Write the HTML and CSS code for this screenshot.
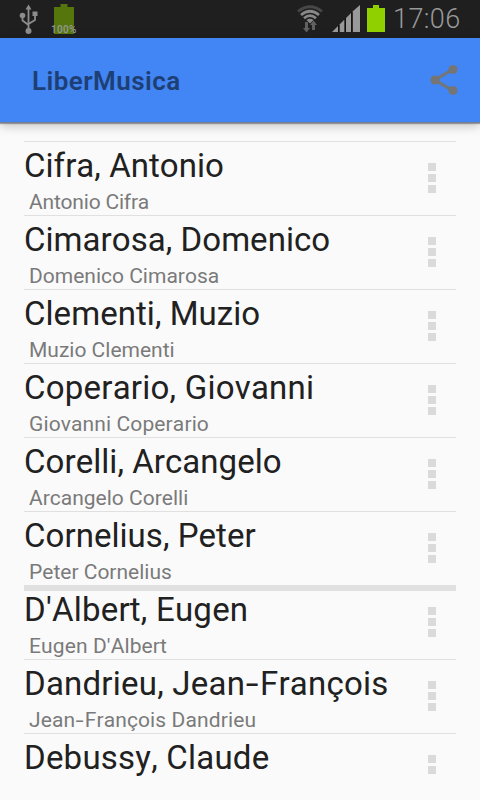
FILE: index.html
```
<!DOCTYPE html>
<html lang="en">
<head>
    <meta charset="UTF-8">
    <meta name="viewport" content="width=device-width, initial-scale=1.0">
    <title>LiberMusica</title>
    <link rel="stylesheet" href="styles.css">
</head>
<body>
<div class="status-bar">
    <svg class="usb" width="20" height="32" viewBox="0 0 20 32" fill="#8c8c8c">
        <path d="M9.500 1.500l3 5h-6z"/>
        <circle cx="9.500" cy="28" r="3"/>
        <circle cx="3.500" cy="12.500" r="2.800"/>
        <rect x="13.500" y="8.500" width="5" height="4.500"/>
        <path d="M9.500 5v22M3.500 14v3.500l6 4.500M16 12v5l-6.500 4" fill="none" stroke="#8c8c8c" stroke-width="1.800"/>
    </svg>
    <div class="charge">
        <svg width="20" height="30" viewBox="0 0 20 30" fill="#55750d"><path d="M6.500 0h7v3h6.500v27H0V3h6.500z"/></svg>
        <span class="charge-text">100%</span>
    </div>
    <div class="spacer"></div>
    <svg class="wifi" width="26" height="30" viewBox="0 0 26 30" fill="none" stroke-width="2.700">
        <path d="M1 7.500Q13 -2 25 7.500" stroke="#474747"/>
        <path d="M4 11Q13 3.500 22 11" stroke="#888"/>
        <path d="M7 14.300Q13 9 19 14.300" stroke="#888"/>
        <path d="M9.500 16Q13 13.500 16.500 16L13 19.500z" fill="#888" stroke="none"/>
        <path d="M8 18h3v6h2l-3.500 4.500L6 24h2zM15 26v-5h-2l3.500-4.500L20 21h-2v5z" fill="#606060" stroke="none"/>
    </svg>
    <svg class="signal" width="28" height="28" viewBox="0 0 28 28" fill="#999">
        <path d="M0 27L6 21v6zM7.500 19.500L12.500 14.500V27h-5zM14 13l5-5v19h-5zM20.500 6.500L28 0v27h-7.500z"/>
        <path d="M6.800 20v7M13.300 13v14M20 7v20" stroke="#111" stroke-width="1.300"/>
    </svg>
    <svg class="battery" width="18" height="27" viewBox="0 0 18 27" fill="#91d000"><path d="M6 0h6v3h6v24H0V3h6z"/></svg>
    <span class="clock">17:06</span>
</div>

<div class="toolbar">
    <span class="title">LiberMusica</span>
    <svg class="share" width="28" height="32" viewBox="0 0 28 32" fill="#757575">
        <path d="M22.500 5.500L5 16l17.500 10.500" fill="none" stroke="#757575" stroke-width="3"/>
        <circle cx="5" cy="16" r="4.500"/>
        <circle cx="23" cy="5.500" r="4.500"/>
        <circle cx="23" cy="26.500" r="4.500"/>
    </svg>
</div>

<div class="list">
    <div class="row">
        <div class="text"><div class="name">Cifra, Antonio</div><div class="sub tight">Antonio Cifra</div></div>
        <div class="menu"><i></i><i></i><i></i></div>
    </div>
    <div class="row">
        <div class="text"><div class="name">Cimarosa, Domenico</div><div class="sub">Domenico Cimarosa</div></div>
        <div class="menu"><i></i><i></i><i></i></div>
    </div>
    <div class="row">
        <div class="text"><div class="name">Clementi, Muzio</div><div class="sub">Muzio Clementi</div></div>
        <div class="menu"><i></i><i></i><i></i></div>
    </div>
    <div class="row">
        <div class="text"><div class="name wide">Coperario, Giovanni</div><div class="sub loose">Giovanni Coperario</div></div>
        <div class="menu"><i></i><i></i><i></i></div>
    </div>
    <div class="row">
        <div class="text"><div class="name">Corelli, Arcangelo</div><div class="sub">Arcangelo Corelli</div></div>
        <div class="menu"><i></i><i></i><i></i></div>
    </div>
    <div class="row">
        <div class="text"><div class="name">Cornelius, Peter</div><div class="sub">Peter Cornelius</div></div>
        <div class="menu"><i></i><i></i><i></i></div>
    </div>
    <div class="row letter">
        <div class="text"><div class="name wide">D'Albert, Eugen</div><div class="sub loose">Eugen D'Albert</div></div>
        <div class="menu"><i></i><i></i><i></i></div>
    </div>
    <div class="row">
        <div class="text"><div class="name wide">Dandrieu, Jean<span class="hyphen">-</span>François</div><div class="sub loose">Jean<span class="hyphen">-</span>François Dandrieu</div></div>
        <div class="menu"><i></i><i></i><i></i></div>
    </div>
    <div class="row">
        <div class="text"><div class="name wide">Debussy, Claude</div></div>
        <div class="menu"><i></i><i></i><i></i></div>
    </div>
</div>
</body>
</html>
```
FILE: styles.css
```
* {
    box-sizing: border-box;
}

body {
    margin: 0;
    height: 800px;
    overflow: hidden;
    display: flex;
    flex-direction: column;
    background-color: #fafafa;
    font-family: Roboto, sans-serif;
    font-kerning: none;
}

svg {
    display: block;
    flex: none;
}

.status-bar {
    height: 38px;
    flex: none;
    display: flex;
    align-items: flex-start;
    padding: 3px 20px 0 19px;
    background-color: #1f1f1f;
}

.charge {
    position: relative;
    margin: 1px 0 0 15px;
}

/* percentage printed over the battery */
.charge-text {
    position: absolute;
    left: -3px;
    bottom: 0;
    font-size: 10px;
    line-height: 9px;
    font-weight: 500;
    letter-spacing: 0.3px;
    color: #999;
}

.spacer {
    flex: 1;
}

.wifi {
    margin-top: 1px;
}

.signal {
    margin: 2px 0 0 9px;
}

.battery {
    margin: 2px 0 0 7px;
}

.clock {
    width: 67px;
    margin-left: 8px;
    font-size: 27px;
    line-height: 32px;
    font-weight: 300;
    letter-spacing: 0.4px;
    color: #999;
    white-space: nowrap;
}

.toolbar {
    height: 85px;
    flex: none;
    display: flex;
    align-items: center;
    justify-content: space-between;
    padding: 0 22px 0 32px;
    background-color: #4285f4;
    border-bottom: 1px solid #757f90;
    box-shadow: 0 1px 1px rgba(0, 0, 0, 0.3), 0 3px 10px rgba(0, 0, 0, 0.22);
}

.title {
    padding-top: 1px;
    font-size: 26px;
    line-height: 32px;
    font-weight: 600;
    letter-spacing: 0.45px;
    color: #1e3f73;
}

.list {
    height: 635px;
    margin: 18px 24px 0;
    overflow: hidden;
}

.row {
    height: 74px;
    display: flex;
    justify-content: space-between;
    border-top: 1px solid #e0e0e0;
}

.text {
    white-space: nowrap;
}

.name {
    height: 45px;
    font-size: 33px;
    line-height: 47px;
    letter-spacing: 0.05px;
    color: #212121;
}

.name.wide {
    letter-spacing: 0.23px;
}

.sub {
    padding-left: 5px;
    font-size: 21px;
    line-height: 30px;
    color: #7a7a7a;
}

.sub.tight {
    letter-spacing: -0.2px;
}

.sub.loose {
    letter-spacing: 0.12px;
}

.hyphen {
    display: inline-block;
    width: 0.45em;
    text-align: center;
    transform: scaleX(1.4);
}

.menu {
    display: flex;
    flex-direction: column;
    gap: 3px;
    padding: 21px 20px 0 0;
}

.menu i {
    width: 8px;
    height: 8px;
    flex: none;
    background-color: #dadada;
}

/* first row of a new letter */
.letter {
    border-top-width: 6px;
}

.letter .text,
.letter .menu {
    margin-top: -5px;
}
```
